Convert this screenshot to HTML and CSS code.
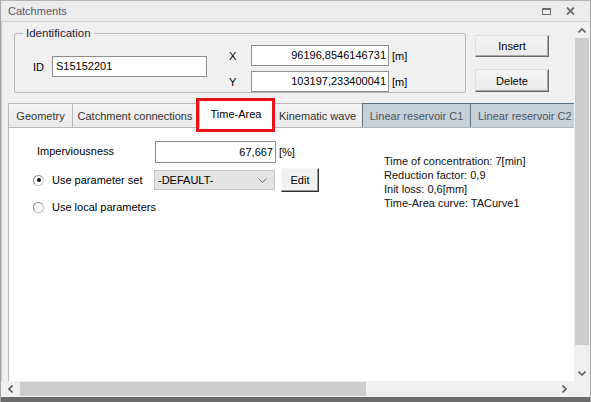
FILE: index.html
```html
<!DOCTYPE html>
<html lang="en">

<head>
    <meta charset="UTF-8" />
    <title>Catchments</title>
    <link rel="stylesheet" href="styles.css">
</head>

<body>
    <div class="window">
        <div class="titlebar">
            <span class="title">Catchments</span>
            <span class="tb-btn">
                <svg width="9" height="7" viewBox="0 0 9 7"><rect x="0.5" y="1" width="8" height="5.5" fill="none" stroke="#6e6e6e" stroke-width="1"/><rect x="0" y="0" width="9" height="2" fill="#6e6e6e"/></svg>
            </span>
            <span class="tb-btn">
                <svg width="9" height="8" viewBox="0 0 9 8"><path d="M1 0.5 L8 7.5 M8 0.5 L1 7.5" stroke="#6e6e6e" stroke-width="1.8"/></svg>
            </span>
        </div>

        <div class="client">
            <div class="viewport">
                <div class="header-row">
                    <div class="group">
                        <span class="group-label">Identification</span>
                        <div class="id-field">
                            <span class="id-label">ID</span>
                            <div class="field id-input">S15152201</div>
                        </div>
                        <div class="coords">
                            <div class="coord">
                                <span class="coord-label">X</span>
                                <div class="field num">96196,8546146731</div>
                                <span class="unit">[m]</span>
                            </div>
                            <div class="coord">
                                <span class="coord-label">Y</span>
                                <div class="field num">103197,233400041</div>
                                <span class="unit">[m]</span>
                            </div>
                        </div>
                    </div>
                    <div class="actions">
                        <div class="btn btn-wide">Insert</div>
                        <div class="btn btn-wide btn-delete">Delete</div>
                    </div>
                </div>

                <div class="tabs">
                    <div class="tab tab-geometry">Geometry</div>
                    <div class="tab tab-connections">Catchment connections</div>
                    <div class="tab tab-active">Time-Area<span class="highlight"></span></div>
                    <div class="tab tab-kinematic">Kinematic wave</div>
                    <div class="tab tab-reservoir tab-c1">Linear reservoir C1</div>
                    <div class="tab tab-reservoir tab-c2">Linear reservoir C2</div>
                </div>

                <div class="panel">
                    <div class="params">
                        <div class="row row-imperv">
                            <span class="row-label">Imperviousness</span>
                            <div class="field num imperv-input">67,667</div>
                            <span class="unit">[%]</span>
                        </div>
                        <div class="row row-set">
                            <span class="radio-wrap"><span class="radio checked"></span>Use parameter set</span>
                            <div class="select">
                                <span>-DEFAULT-</span>
                                <svg width="9" height="5" viewBox="0 0 9 5"><path d="M0.5 0.5 L4.5 4.5 L8.5 0.5" fill="none" stroke="#707070" stroke-width="1"/></svg>
                            </div>
                            <div class="btn btn-edit">Edit</div>
                        </div>
                        <div class="row row-local">
                            <span class="radio-wrap"><span class="radio"></span>Use local parameters</span>
                        </div>
                    </div>
                    <div class="summary">
                        <div>Time of concentration: 7[min]</div>
                        <div>Reduction factor: 0,9</div>
                        <div>Init loss: 0,6[mm]</div>
                        <div>Time-Area curve: TACurve1</div>
                    </div>
                </div>
            </div>

            <div class="vscroll">
                <div class="arrow">
                    <svg width="8" height="5" viewBox="0 0 8 5"><path d="M0.5 4.5 L4 1 L7.5 4.5" fill="none" stroke="#606060" stroke-width="1.6"/></svg>
                </div>
                <div class="vthumb"></div>
                <div class="vtrack"></div>
                <div class="arrow">
                    <svg width="8" height="5" viewBox="0 0 8 5"><path d="M0.5 0.5 L4 4 L7.5 0.5" fill="none" stroke="#606060" stroke-width="1.6"/></svg>
                </div>
            </div>
        </div>

        <div class="hscroll-row">
            <div class="hscroll">
                <div class="arrow harrow">
                    <svg width="5" height="8" viewBox="0 0 5 8"><path d="M4.5 0.5 L1 4 L4.5 7.5" fill="none" stroke="#606060" stroke-width="1.6"/></svg>
                </div>
                <div class="hthumb"></div>
                <div class="htrack"></div>
                <div class="arrow harrow">
                    <svg width="5" height="8" viewBox="0 0 5 8"><path d="M0.5 0.5 L4 4 L0.5 7.5" fill="none" stroke="#606060" stroke-width="1.6"/></svg>
                </div>
            </div>
            <div class="corner"></div>
        </div>
        <div class="bottom-bar"></div>
    </div>
</body>

</html>
```

FILE: styles.css
```css
* {
    box-sizing: border-box;
    margin: 0;
    padding: 0;
}

body {
    font-family: "Liberation Sans", Arial, sans-serif;
    font-size: 11px;
    color: #000;
    background: #f0f0f0;
    width: 591px;
    height: 402px;
    overflow: hidden;
}

.window {
    width: 591px;
    height: 402px;
    display: flex;
    flex-direction: column;
    background: #f0f0f0;
    border-left: 1px solid #a4a4a4;
    border-right: 1px solid #a4a4a4;
}

/* title bar */

.titlebar {
    height: 22px;
    flex-shrink: 0;
    display: flex;
    align-items: center;
    background: #ececec;
    border-top: 1px solid #b4b4b4;
    border-bottom: 1px solid #d2d2d2;
    padding: 0 8px 0 7px;
}

.title {
    flex: 1;
    color: #585868;
    font-size: 11px;
}

.tb-btn {
    width: 24px;
    display: flex;
    justify-content: center;
    align-items: center;
    height: 16px;
}

/* client area */

.client {
    flex: 1;
    display: flex;
    min-height: 0;
}

.viewport {
    flex: 1;
    overflow: hidden;
    display: flex;
    flex-direction: column;
    border-left: 1px solid #c8c8c8;
}

.header-row {
    display: flex;
    padding: 11px 0 0 12px;
    flex-shrink: 0;
}

.group {
    position: relative;
    width: 452px;
    height: 60px;
    border: 1px solid #b8b8b8;
    border-radius: 2px;
    display: flex;
    align-items: flex-start;
    padding-left: 18px;
}

.group-label {
    position: absolute;
    top: -8px;
    left: 8px;
    padding: 0 3px;
    background: #f0f0f0;
    color: #1c1c3a;
    font-size: 11.5px;
    line-height: 14px;
}

.id-field {
    display: flex;
    align-items: center;
    margin-top: 22px;
}

.id-label {
    width: 19px;
}

.field {
    background: #fff;
    border: 1px solid #8e8e8e;
    height: 21px;
    line-height: 19px;
    padding: 0 3px;
    white-space: nowrap;
}

.id-input {
    width: 155px;
}

.num {
    text-align: right;
    padding-right: 2px;
}

.coords {
    margin-left: 22px;
    margin-top: 11px;
    display: flex;
    flex-direction: column;
    gap: 5px;
}

.coord {
    display: flex;
    align-items: center;
}

.coord-label {
    width: 22px;
}

.coord .field {
    width: 138px;
}

.unit {
    margin-left: 3px;
}

.actions {
    margin-left: 9px;
    margin-top: 2px;
    display: flex;
    flex-direction: column;
}

.btn {
    display: flex;
    align-items: center;
    justify-content: center;
    background: linear-gradient(#f4f4f4, #ebebeb);
    border: 1px solid;
    border-color: #e0e0e0 #6a6a6a #6a6a6a #e0e0e0;
    box-shadow: inset -1px -1px 0 #a8a8a8;
}

.btn-wide {
    width: 74px;
    height: 22px;
}

.btn-delete {
    margin-top: 12px;
    height: 23px;
}

/* tabs */

.tabs {
    display: flex;
    align-items: flex-end;
    margin-top: 7px;
    padding-left: 6px;
    height: 28px;
    flex-shrink: 0;
    position: relative;
    z-index: 1;
}

.tab {
    height: 24px;
    margin-bottom: 1px;
    border: 1px solid #b8b8b8;
    border-bottom: none;
    background: linear-gradient(#f3f3f3, #ebebeb);
    color: #333;
    display: flex;
    align-items: center;
    justify-content: center;
    white-space: nowrap;
    flex-shrink: 0;
    margin-left: -1px;
}

.tab-geometry {
    width: 65px;
    margin-left: 0;
}

.tab-connections {
    width: 126px;
}

.tab-active {
    position: relative;
    width: 74px;
    height: 28px;
    margin-bottom: 0;
    margin-left: 1px;
    background: #fff;
    color: #000;
    padding-bottom: 1px;
}

.highlight {
    position: absolute;
    left: -4px;
    top: -3px;
    width: 79px;
    height: 34px;
    border: 3px solid #e8121a;
}

.tab-kinematic {
    width: 91px;
}

.tab-reservoir {
    background: #c7cfd7;
    border-color: #5f7482;
    color: #4a5662;
}

.tab-c1 {
    width: 109px;
}

.tab-c2 {
    width: 108px;
    justify-content: flex-start;
    padding-left: 7px;
}

.panel {
    flex: 1;
    margin: -1px 0 0 6px;
    width: 620px;
    background: #fff;
    border-top: 1px solid #b8b8b8;
    border-left: 1px solid #b8b8b8;
    display: flex;
    align-items: flex-start;
}

.params {
    flex: 0 0 375px;
    padding-left: 24px;
}

.row {
    display: flex;
    align-items: center;
}

.row-imperv {
    margin-top: 13px;
    height: 22px;
}

.row-label {
    width: 121px;
    padding-left: 4px;
    margin-top: -3px;
}

.imperv-input {
    width: 121px;
    height: 22px;
    line-height: 20px;
    margin-left: 1px;
}

.unit {
    margin-left: 3px;
}

.row-set {
    margin-top: 5px;
    height: 24px;
}

.radio-wrap {
    display: flex;
    align-items: center;
    width: 121px;
    flex-shrink: 0;
    white-space: nowrap;
}

.row-local .radio-wrap {
    width: auto;
}

.radio {
    width: 11px;
    height: 11px;
    flex-shrink: 0;
    border-radius: 50%;
    border: 1px solid #c4c4c4;
    border-top-color: #8a8a8a;
    border-left-color: #8a8a8a;
    background: #fff;
    margin-right: 8px;
    display: flex;
    align-items: center;
    justify-content: center;
}

.radio.checked::after {
    content: "";
    width: 4px;
    height: 4px;
    border-radius: 50%;
    background: #111;
}

.select {
    width: 121px;
    height: 20px;
    background: #e4e4e4;
    border: 1px solid #c4c4c4;
    display: flex;
    align-items: center;
    justify-content: space-between;
    padding: 0 7px 0 3px;
}

.btn-edit {
    width: 38px;
    height: 24px;
    margin-left: 6px;
    background: #f2f2f2;
    border-color: #f8f8f8 #303030 #303030 #f8f8f8;
    box-shadow: inset -1px -1px 0 #9a9a9a;
}

.row-local {
    margin-top: 7px;
    height: 16px;
}

.summary {
    margin-top: 26px;
    line-height: 14px;
    color: #111;
}

/* scrollbars */

.vscroll {
    width: 16px;
    flex-shrink: 0;
    display: flex;
    flex-direction: column;
    background: #f0f0f0;
}

.arrow {
    height: 16px;
    flex-shrink: 0;
    display: flex;
    align-items: center;
    justify-content: center;
}

.vthumb {
    height: 307px;
    margin: 0 1px;
    background: #cdcdcd;
}

.vtrack {
    flex: 1;
}

.hscroll-row {
    height: 16px;
    flex-shrink: 0;
    display: flex;
}

.hscroll {
    flex: 1;
    display: flex;
    background: #f0f0f0;
}

.harrow {
    width: 19px;
    height: 16px;
}

.hthumb {
    width: 346px;
    margin: 1px 0;
    background: #cdcdcd;
}

.htrack {
    flex: 1;
}

.corner {
    width: 16px;
    background: #f0f0f0;
}

.bottom-bar {
    height: 5px;
    flex-shrink: 0;
    background: #6b6b6b;
}
```
